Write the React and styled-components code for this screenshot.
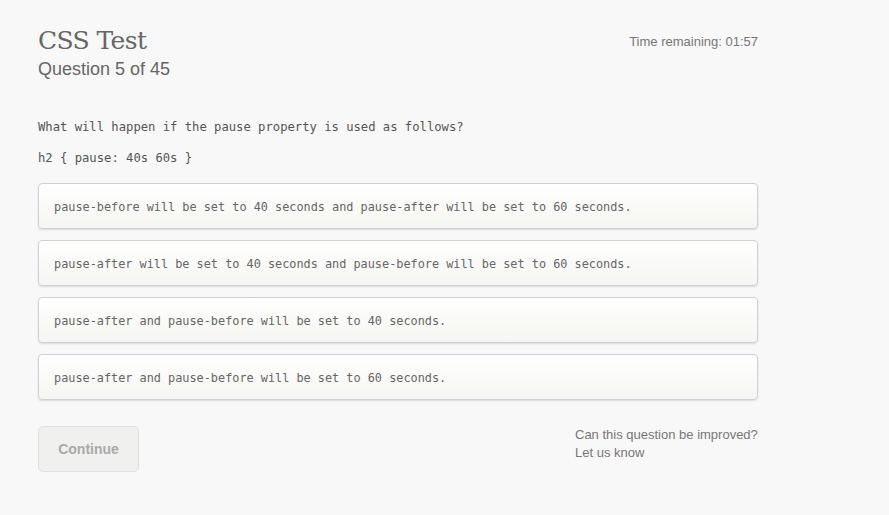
import styled, { createGlobalStyle } from "styled-components";

const GlobalStyle = createGlobalStyle`
  html, body {
    margin: 0;
    padding: 0;
    background: #f8f8f8;
  }
  body {
    font-family: "Liberation Sans", Arial, sans-serif;
  }
`;

const options = [
  "pause-before will be set to 40 seconds and pause-after will be set to 60 seconds.",
  "pause-after will be set to 40 seconds and pause-before will be set to 60 seconds.",
  "pause-after and pause-before will be set to 40 seconds.",
  "pause-after and pause-before will be set to 60 seconds.",
];

const App = () => {
  return (
    <Page>
      <GlobalStyle />
      <Header>
        <div>
          <Title>CSS Test</Title>
          <Subtitle>Question 5 of 45</Subtitle>
        </div>
        <Timer>Time remaining: 01:57</Timer>
      </Header>
      <Question>What will happen if the pause property is used as follows?</Question>
      <Code>h2 {"{"} pause: 40s 60s {"}"}</Code>
      <Options>
        {options.map((text, i) => (
          <Option key={i}>{text}</Option>
        ))}
      </Options>
      <Footer>
        <Continue disabled>Continue</Continue>
        <Feedback>
          Can this question be improved?
          <br />
          <a>Let us know</a>
        </Feedback>
      </Footer>
    </Page>
  );
};

const Page = styled.div`
  width: 720px;
  padding: 25px 0 40px 38px;
`;

const Header = styled.div`
  display: flex;
  justify-content: space-between;
  align-items: flex-start;
`;

const Title = styled.h1`
  margin: 0;
  font-family: "DejaVu Serif", serif;
  font-weight: normal;
  font-size: 25px;
  line-height: 32px;
  color: #666;
  letter-spacing: -0.6px;
`;

const Subtitle = styled.h2`
  margin: 0;
  font-weight: normal;
  font-size: 18px;
  line-height: 24px;
  color: #666;
`;

const Timer = styled.div`
  margin-top: 9px;
  font-size: 13px;
  color: #777;
`;

const Question = styled.p`
  margin: 38px 0 0;
  font-family: "DejaVu Sans Mono", monospace;
  font-size: 12.2px;
  line-height: 16px;
  color: #555;
`;

const Code = styled.p`
  margin: 15px 0 0;
  font-family: "DejaVu Sans Mono", monospace;
  font-size: 12.2px;
  line-height: 16px;
  color: #555;
`;

const Options = styled.div`
  margin-top: 17px;
  display: flex;
  flex-direction: column;
  gap: 11px;
`;

const Option = styled.div`
  height: 46px;
  box-sizing: border-box;
  display: flex;
  align-items: center;
  padding: 2px 15px 0;
  border: 1px solid #d0d0d8;
  border-radius: 4px;
  background: linear-gradient(#ffffff, #f5f5f1);
  box-shadow: 0 1px 2px rgba(0, 0, 0, 0.12);
  font-family: "DejaVu Sans Mono", monospace;
  font-size: 11.85px;
  color: #666;
  cursor: pointer;
`;

const Footer = styled.div`
  margin-top: 26px;
  display: flex;
  justify-content: space-between;
  align-items: flex-start;
`;

const Continue = styled.button`
  width: 101px;
  height: 46px;
  border: 1px solid #e0e0e0;
  border-radius: 5px;
  background: #f0f0ee;
  font-family: "Liberation Sans", Arial, sans-serif;
  font-weight: bold;
  font-size: 14px;
  color: #aaa;
`;

const Feedback = styled.div`
  width: 183px;
  margin-top: 0;
  white-space: nowrap;
  font-size: 13px;
  line-height: 18px;
  color: #777;
  a {
    color: #777;
    cursor: pointer;
  }
`;

export default App;
